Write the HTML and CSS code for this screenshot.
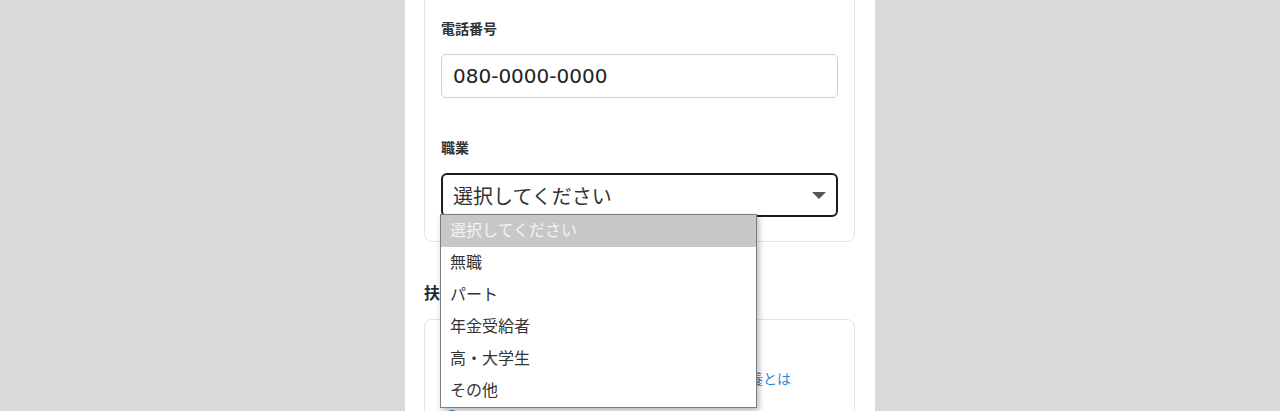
FILE: index.html
```html
<!DOCTYPE html>
<html lang="ja">
<head>
<meta charset="utf-8">
<title>フォーム</title>
<link rel="stylesheet" href="styles.css">
</head>
<body>
<div class="page">
  <section class="card">
    <div class="field">
      <label class="label">電話番号</label>
      <div class="input">080-0000-0000</div>
    </div>
    <div class="field field-job">
      <label class="label">職業</label>
      <div class="select-wrap">
        <div class="select">
          <span>選択してください</span>
          <svg class="arrow" width="14" height="8" viewBox="0 0 14 8"><path d="M0 0h14L7 7z" fill="#555"/></svg>
        </div>
        <ul class="dropdown">
          <li class="opt active">選択してください</li>
          <li class="opt">無職</li>
          <li class="opt">パート</li>
          <li class="opt">年金受給者</li>
          <li class="opt">高・大学生</li>
          <li class="opt">その他</li>
        </ul>
      </div>
    </div>
  </section>

  <h2 class="section-title">扶養の状況</h2>

  <section class="card card2">
    <p class="question">扶養している家族はいますか？</p>
    <a class="help-link" href="#"><span class="info">?</span>所得税・住民税の扶養控除と社会保険上の扶養とは</a>
    <div class="radio-row"><span class="radio"></span><span>はい</span></div>
  </section>
</div>
</body>
</html>
```

FILE: styles.css
```css
* { box-sizing: border-box; }
html, body { margin: 0; padding: 0; }
body {
  background: #d9d9d9;
  font-family: "DejaVu Sans", "Noto Sans CJK JP", sans-serif;
  color: #333;
  overflow: hidden;
}
.page {
  width: 470px;
  margin: -7px auto 0;
  background: #fff;
  padding: 0 20px 40px 19px;
  min-height: 460px;
}
.card {
  border: 1px solid #e4e4e4;
  border-radius: 8px;
  padding: 24px 16px 24px 16px;
  background: #fff;
}
.field { display: flex; flex-direction: column; }
.field-job { margin-top: 39px; }
.label {
  font-family: "Noto Sans CJK JP", sans-serif;
  font-size: 14px;
  line-height: 20px;
  font-weight: 700;
  color: #333;
  margin-bottom: 16px;
}
.input {
  height: 44px;
  border: 1px solid #cfcfcf;
  border-radius: 5px;
  padding: 0 11px;
  font-size: 20px;
  line-height: 42px;
  color: #222;
}
.select-wrap { position: relative; }
.select {
  height: 44px;
  border: 2px solid #1c1c1c;
  border-radius: 6px;
  padding: 0 10px;
  display: flex;
  align-items: center;
  justify-content: space-between;
  font-family: "Noto Sans CJK JP", sans-serif;
  font-size: 20px;
  color: #333;
}
.arrow { margin-top: 1px; }
.dropdown {
  position: absolute;
  top: 41px;
  left: -1px;
  width: 317px;
  margin: 0;
  padding: 0;
  list-style: none;
  background: #fff;
  border: 1px solid #7c7c7c;
  box-shadow: 2px 3px 6px rgba(0, 0, 0, 0.28);
  z-index: 10;
}
.opt {
  height: 32px;
  line-height: 29px;
  padding: 0 0 3px 9px;
  font-family: "Noto Sans CJK JP", sans-serif;
  font-size: 16px;
  color: #333;
}
.opt.active {
  background: #c7c7c7;
  color: #f3f3f3;
}
.section-title {
  margin: 38px 0 15px;
  font-family: "Noto Sans CJK JP", sans-serif;
  font-size: 16px;
  line-height: 24px;
  font-weight: 700;
  color: #1c2a38;
}
.card2 { padding-top: 16px; }
.question {
  margin: 0 0 12px;
  font-family: "Noto Sans CJK JP", sans-serif;
  font-size: 14px;
  line-height: 20px;
  font-weight: 700;
  color: #333;
}
.help-link {
  display: flex;
  align-items: center;
  font-family: "Noto Sans CJK JP", sans-serif;
  font-size: 14px;
  line-height: 20px;
  color: #2b88d6;
  text-decoration: none;
}
.info {
  width: 18px;
  height: 18px;
  border-radius: 50%;
  background: #2b88d6;
  color: #fff;
  font-size: 12px;
  line-height: 18px;
  text-align: center;
  margin-right: 10px;
  flex: none;
}
.radio-row {
  margin-top: 18px;
  display: flex;
  align-items: center;
  gap: 10px;
  font-family: "Noto Sans CJK JP", sans-serif;
  font-size: 16px;
}
.radio {
  width: 16px;
  height: 16px;
  border-radius: 50%;
  border: 5px solid #2b7fd0;
  background: #fff;
  margin-left: 3px;
}
```
